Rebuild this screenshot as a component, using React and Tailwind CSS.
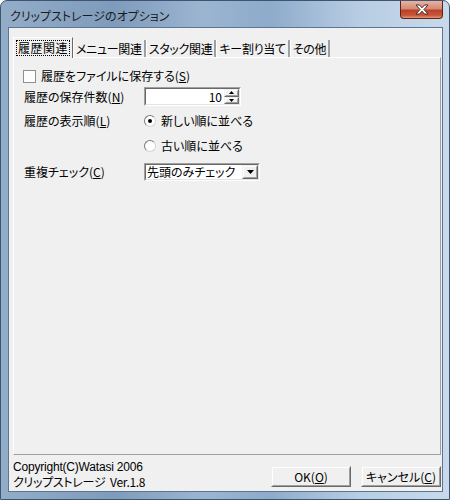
import React from 'react';

const font = "font-['Noto_Sans_CJK_JP','Noto_Sans',sans-serif] [font-feature-settings:'palt']";

const tabs = ['履歴関連', 'メニュー関連', 'スタック関連', 'キー割り当て', 'その他'];

function Radio({ checked, children }) {
    return (
        <div className="flex items-center h-[14px]">
            <span className="w-[12px] h-[12px] rounded-full border border-t-[#7a7a7a] border-l-[#7a7a7a] border-r-[#d4d4d4] border-b-[#d4d4d4] bg-white flex items-center justify-center">
                {checked && <span className="w-[4px] h-[4px] rounded-full bg-black" />}
            </span>
            <span className="ml-[5px]">{children}</span>
        </div>
    );
}

function Sunken({ className, children }) {
    return (
        <div className={"border border-t-[#a0a0a0] border-l-[#a0a0a0] border-r-white border-b-white " + className}>
            <div className="w-full h-full border border-t-[#696969] border-l-[#696969] border-r-[#e3e3e3] border-b-[#e3e3e3] bg-white flex items-center">
                {children}
            </div>
        </div>
    );
}

function Raised({ className, children }) {
    return (
        <div className={"border border-t-[#f0f0f0] border-l-[#f0f0f0] border-r-[#696969] border-b-[#696969] bg-[#f0f0f0] " + className}>
            <div className="w-full h-full border border-t-white border-l-white border-r-[#a0a0a0] border-b-[#a0a0a0] flex items-center justify-center">
                {children}
            </div>
        </div>
    );
}

export default function App() {
    return (
        <div className={"w-[450px] h-[500px] flex flex-col border border-[#3d5570] rounded-t-[7px] overflow-hidden relative text-[12px] leading-[14px] text-black bg-[linear-gradient(90deg,#93adc9_0%,#7f9bbb_25%,#9bb5d1_45%,#8eabcb_60%,#b8cde3_80%,#c8d9eb_100%)] " + font}>
            {/* title bar */}
            <div className="h-[26px] shrink-0 flex items-center pl-[9px] pt-[4px] text-[#1b1b1b]">
                クリップストレージのオプション
            </div>
            <div className="absolute right-[6px] top-0 w-[43px] h-[18px] rounded-b-[4px] border border-t-0 border-[#5a2418] bg-[linear-gradient(180deg,#e7b3a4_0%,#d68a73_45%,#b8412a_55%,#c9573c_85%,#e49a7a_100%)] flex items-center justify-center">
                <svg width="14" height="11" viewBox="0 0 14 11">
                    <path d="M1 1 L4.5 1 L7 3.8 L9.5 1 L13 1 L9 5.5 L13 10 L9.5 10 L7 7.2 L4.5 10 L1 10 L5 5.5 Z" fill="white" stroke="#4a2a24" strokeWidth="1" strokeLinejoin="round" />
                </svg>
            </div>

            {/* client area */}
            <div className="flex-1 ml-[7px] mr-[6px] mb-[7px] border border-[#5c7592] bg-[#f0f0f0] flex flex-col pl-[4px] pr-[1px]">
                {/* tabs */}
                <div className="flex items-end mt-[9px] h-[20px] relative z-10 tracking-[-0.3px]">
                    {tabs.map((t, i) => (
                        i === 0 ? (
                            <div key={t} className="h-[21px] -mb-[1px] px-[2px] pt-[2px] bg-[#f0f0f0] border-l border-t border-white border-r border-r-[#696969] flex">
                                <span className="border border-dotted border-black px-[1px] h-[16px] flex items-center tracking-[0.5px]">{t}</span>
                            </div>
                        ) : (
                            <div key={t} className="h-[17px] px-[2px] border-l border-white border-r-2 border-r-[#a0a0a0] flex items-center">
                                {t}
                            </div>
                        )
                    ))}
                </div>

                {/* panel */}
                <div className="flex-1 border border-t-white border-l-white border-r-[#a0a0a0] border-b-[#a0a0a0] pl-[9px] flex flex-col">
                    <div className="flex items-center h-[14px] mt-[11px]">
                        <span className="w-[13px] h-[13px] border border-[#8f8f8f] bg-[#fdfdfd]" />
                        <span className="ml-[5px]">履歴をファイルに保存する(<span className="underline">S</span>)</span>
                    </div>

                    <div className="flex items-center h-[19px] mt-[4px]">
                        <span className="w-[121px] pl-[1px]">履歴の保存件数(<span className="underline">N</span>)</span>
                        <Sunken className="w-[97px] h-[19px]">
                            <span className="flex-1 text-right pr-[2px] leading-[13px]">10</span>
                            <div className="w-[15px] h-full flex flex-col">
                                <Raised className="h-1/2 w-full">
                                    <svg width="5" height="3" viewBox="0 0 5 3"><path d="M2.5 0 L5 3 L0 3 Z" fill="black" /></svg>
                                </Raised>
                                <Raised className="h-1/2 w-full">
                                    <svg width="5" height="3" viewBox="0 0 5 3"><path d="M0 0 L5 0 L2.5 3 Z" fill="black" /></svg>
                                </Raised>
                            </div>
                        </Sunken>
                    </div>

                    <div className="flex items-center h-[14px] mt-[8px]">
                        <span className="w-[121px] pl-[1px]">履歴の表示順(<span className="underline">L</span>)</span>
                        <Radio checked>新しい順に並べる</Radio>
                    </div>
                    <div className="flex items-center h-[14px] mt-[11px]">
                        <span className="w-[121px]" />
                        <Radio>古い順に並べる</Radio>
                    </div>

                    <div className="flex items-center h-[18px] mt-[10px]">
                        <span className="w-[121px] pl-[1px]">重複チェック(<span className="underline">C</span>)</span>
                        <Sunken className="w-[116px] h-[18px]">
                            <span className="flex-1 pl-[1px]">先頭のみチェック</span>
                            <Raised className="w-[16px] h-full">
                                <svg width="7" height="4" viewBox="0 0 7 4"><path d="M0 0 L7 0 L3.5 4 Z" fill="black" /></svg>
                            </Raised>
                        </Sunken>
                    </div>
                </div>

                {/* footer */}
                <div className="h-[36px] shrink-0 flex items-start">
                    <div className="flex-1 pt-[6px] flex flex-col gap-[1px]">
                        <div className="font-['Liberation_Sans',sans-serif] leading-[13px] tracking-[-0.2px]">Copyright(C)Watasi 2006</div>
                        <div className="leading-[14px] tracking-[-0.3px]">クリップストレージ&nbsp; Ver.1.8</div>
                    </div>
                    <div className="flex gap-[10px] mt-[11px]">
                        <Raised className="w-[80px] h-[21px]">OK(<span className="underline">O</span>)</Raised>
                        <Raised className="w-[80px] h-[21px]">キャンセル(<span className="underline">C</span>)</Raised>
                    </div>
                </div>
            </div>
        </div>
    );
}
